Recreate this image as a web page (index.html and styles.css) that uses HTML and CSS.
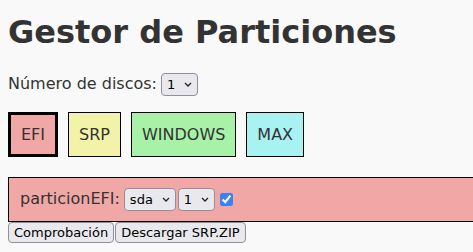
FILE: index.html
```html
<!DOCTYPE html>
<html lang="es">

<head>
    <meta charset="UTF-8">
    <meta name="viewport" content="width=device-width, initial-scale=1.0">
    <title>Gestor de Particiones</title>
    <link rel="stylesheet" href="styles.css">
</head>

<body>
    <h1>Gestor de Particiones</h1>

    <div class="discos">
        <label for="numDiscos">Número de discos:</label>
        <span class="selector">
            <select id="numDiscos">
                <option>1</option>
                <option>2</option>
                <option>3</option>
            </select>
            <svg class="flecha" viewBox="0 0 8 5" width="8" height="5"><path d="M1 1 L4 4 L7 1" /></svg>
        </span>
    </div>

    <div class="tipos">
        <div class="tipo efi activo">EFI</div>
        <div class="tipo srp">SRP</div>
        <div class="tipo windows">WINDOWS</div>
        <div class="tipo max">MAX</div>
    </div>

    <div class="particion efi">
        <span class="nombre">particionEFI:</span>
        <span class="selector">
            <select class="disco">
                <option>sda</option>
                <option>sdb</option>
            </select>
            <svg class="flecha" viewBox="0 0 8 5" width="8" height="5"><path d="M1 1 L4 4 L7 1" /></svg>
        </span>
        <span class="selector">
            <select class="num">
                <option>1</option>
                <option>2</option>
            </select>
            <svg class="flecha" viewBox="0 0 8 5" width="8" height="5"><path d="M1 1 L4 4 L7 1" /></svg>
        </span>
        <input type="checkbox" checked>
    </div>

    <div class="acciones">
        <button>Comprobación</button>
        <button>Descargar SRP.ZIP</button>
    </div>
</body>

</html>
```
FILE: styles.css
```css
body {
    margin: 0;
    padding: 8px;
    background-color: #f9f9f9;
    color: #333;
    font-family: "DejaVu Sans", sans-serif;
    font-size: 16px;
}

h1 {
    font-size: 32px;
    line-height: 37px;
    margin: 6px 0 22px 0;
}

.discos {
    display: flex;
    align-items: baseline;
    gap: 4px;
    height: 23px;
}

.selector {
    position: relative;
    display: inline-flex;
}

select {
    appearance: none;
    -webkit-appearance: none;
    height: 23px;
    padding: 0 21px 0 5px;
    background-color: #e9e9ed;
    border: 1px solid #8f8f9d;
    border-radius: 4px;
    color: black;
    font-family: "DejaVu Sans", sans-serif;
    font-size: 13px;
}

.flecha {
    position: absolute;
    right: 6px;
    top: 9px;
    fill: none;
    stroke: #222;
    stroke-width: 1.3;
    pointer-events: none;
}

.tipos {
    display: flex;
    gap: 10px;
    margin-top: 16px;
}

.tipo {
    border: 1px solid black;
    padding: 12px 10px;
    line-height: 19px;
}

.tipo.activo {
    border-width: 3px;
    padding: 10px 10px;
}

.efi {
    background-color: #f2a7a7;
}

.srp {
    background-color: #f2f2a8;
}

.windows {
    background-color: #a8f2a8;
}

.max {
    background-color: #a8f2f2;
}

.particion {
    margin-top: 20px;
    border: 1px solid black;
    width: 500px;
    height: 33px;
    padding: 10px 0 0 11px;
    display: flex;
    align-items: baseline;
    gap: 2px;
}

.particion .nombre {
    margin-right: 2px;
}

.particion input {
    margin: 0 0 0 3px;
    width: 13px;
    height: 13px;
    accent-color: #3b82f0;
    align-self: center;
    position: relative;
    top: -5px;
}

.acciones {
    display: flex;
    gap: 1px;
}

.acciones button {
    height: 21px;
    padding: 0 5px;
    background-color: #e9e9ed;
    border: 1px solid #8f8f9d;
    border-radius: 4px;
    color: black;
    font-family: "DejaVu Sans", sans-serif;
    font-size: 13px;
}
```
